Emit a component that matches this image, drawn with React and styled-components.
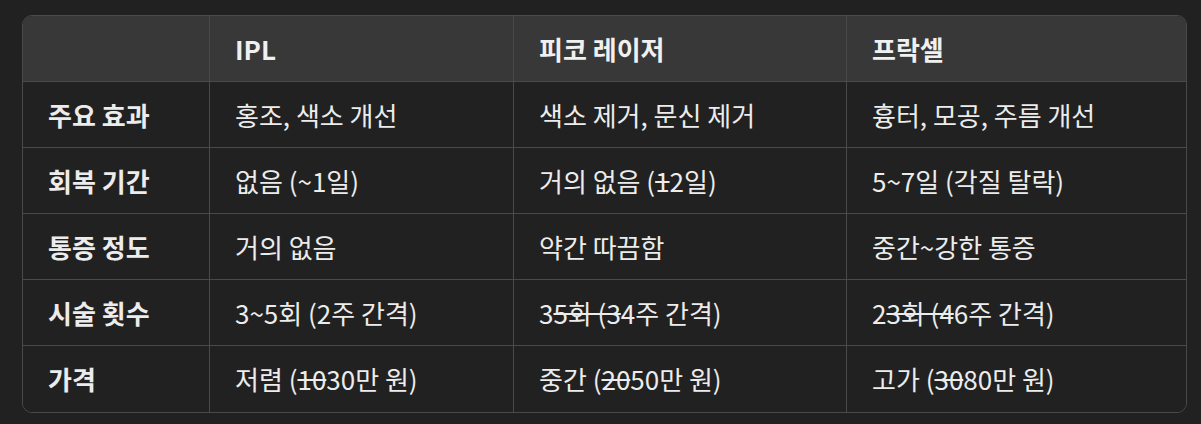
import React from 'react';
import styled, { createGlobalStyle } from 'styled-components';

const GlobalStyle = createGlobalStyle`
  html, body {
    margin: 0;
    background: #212121;
  }
  body {
    font-family: "Noto Sans CJK KR", "Noto Sans", sans-serif;
    color: #ececec;
  }
`;

const columns = ['', 'IPL', '피코 레이저', '프락셀'];
const widths = [187, 304, 333, 340];

// struck-through bits come straight from the source text (markdown ~ leftovers)
const rows = [
  ['주요 효과', ['홍조, 색소 개선'], ['색소 제거, 문신 제거'], ['흉터, 모공, 주름 개선']],
  ['회복 기간', ['없음 (~1일)'], ['거의 없음 (', { s: '1' }, '2일)'], ['5~7일 (각질 탈락)']],
  ['통증 정도', ['거의 없음'], ['약간 따끔함'], ['중간~강한 통증']],
  ['시술 횟수', ['3~5회 (2주 간격)'], ['3', { s: '5회 (3' }, '4주 간격)'], ['2', { s: '3회 (4' }, '6주 간격)']],
  ['가격', ['저렴 (', { s: '10' }, '30만 원)'], ['중간 (', { s: '20' }, '50만 원)'], ['고가 (', { s: '30' }, '80만 원)']],
];

export default function App() {
  return (
    <>
      <GlobalStyle />
      <Page>
        <TableWrap>
          <Table>
            <colgroup>
              {widths.map((w, i) => (
                <col key={i} style={{ width: w }} />
              ))}
            </colgroup>
            <thead>
              <tr>
                {columns.map((c, i) => (
                  <HeadCell key={i} $last={i === columns.length - 1}>{c}</HeadCell>
                ))}
              </tr>
            </thead>
            <tbody>
              {rows.map((row, r) => (
                <tr key={r}>
                  <Cell $bold $lastRow={r === rows.length - 1}>{row[0]}</Cell>
                  {row.slice(1).map((parts, c) => (
                    <Cell key={c} $last={c === 2} $lastRow={r === rows.length - 1}>
                      {parts.map((p, k) =>
                        typeof p === 'string' ? p : <Strike key={k}>{p.s}</Strike>
                      )}
                    </Cell>
                  ))}
                </tr>
              ))}
            </tbody>
          </Table>
        </TableWrap>
      </Page>
    </>
  );
}

const Page = styled.div`
  padding: 15px 0 0 22px;
`;

const TableWrap = styled.div`
  width: 1165px;
  border: 1px solid #4a4a4a;
  border-radius: 10px;
  overflow: hidden;
  box-sizing: border-box;
`;

const Table = styled.table`
  width: 100%;
  table-layout: fixed;
  border-collapse: separate;
  border-spacing: 0;
  font-size: 26px;
  line-height: 32px;
`;

const HeadCell = styled.th`
  height: 66px;
  box-sizing: border-box;
  padding: 0 25px;
  text-align: left;
  font-weight: 600;
  background: #383838;
  border-bottom: 1px solid #4a4a4a;
  border-right: ${(p) => (p.$last ? 'none' : '1px solid #4a4a4a')};
  color: #f0f0f0;
`;

const Cell = styled.td`
  height: 66px;
  box-sizing: border-box;
  padding: 0 25px;
  font-weight: ${(p) => (p.$bold ? 600 : 400)};
  background: #212121;
  border-bottom: ${(p) => (p.$lastRow ? 'none' : '1px solid #4a4a4a')};
  border-right: ${(p) => (p.$last ? 'none' : '1px solid #4a4a4a')};
  white-space: nowrap;
`;

const Strike = styled.del`
  text-decoration: line-through;
  text-decoration-thickness: 1.5px;
`;
